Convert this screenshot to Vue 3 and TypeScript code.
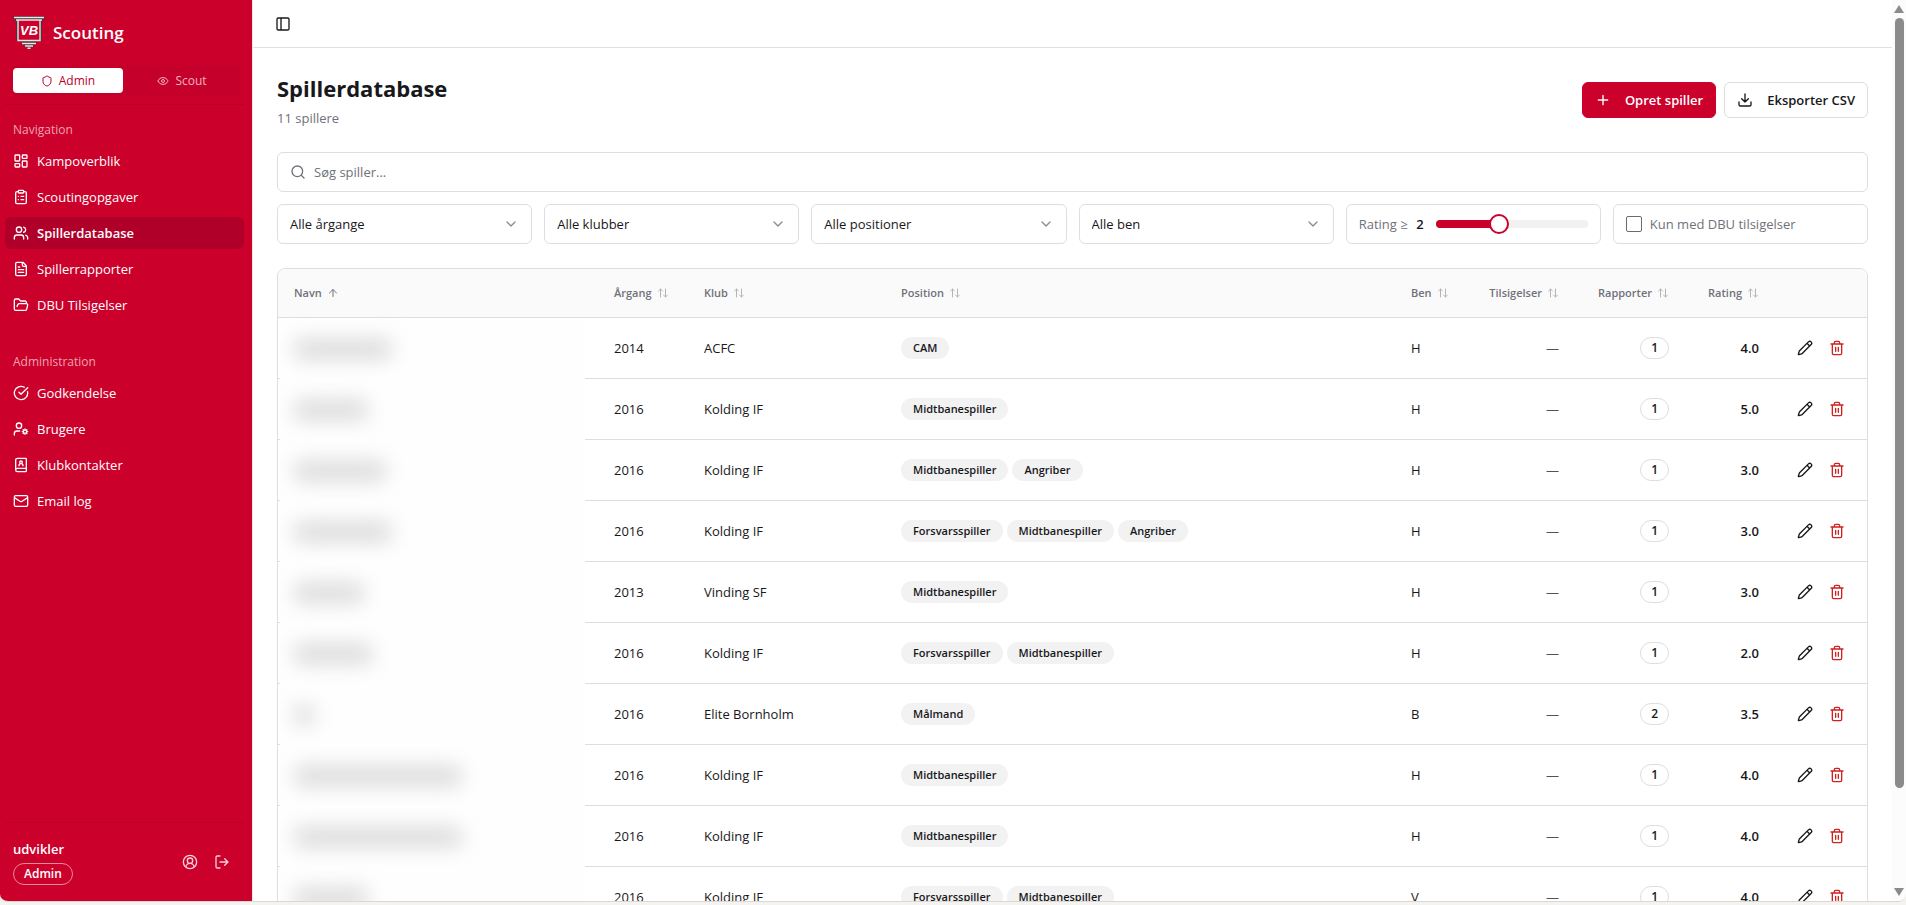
<script setup lang="ts">
import { computed, h, ref } from 'vue'

const paths = {
  dashboard: 'M4 3h5a1 1 0 0 1 1 1v7a1 1 0 0 1-1 1H4a1 1 0 0 1-1-1V4a1 1 0 0 1 1-1z M15 3h5a1 1 0 0 1 1 1v3a1 1 0 0 1-1 1h-5a1 1 0 0 1-1-1V4a1 1 0 0 1 1-1z M15 12h5a1 1 0 0 1 1 1v7a1 1 0 0 1-1 1h-5a1 1 0 0 1-1-1v-7a1 1 0 0 1 1-1z M4 16h5a1 1 0 0 1 1 1v3a1 1 0 0 1-1 1H4a1 1 0 0 1-1-1v-3a1 1 0 0 1 1-1z',
  clipboard: 'M9 2h6a1 1 0 0 1 1 1v2a1 1 0 0 1-1 1H9a1 1 0 0 1-1-1V3a1 1 0 0 1 1-1z M16 4h2a2 2 0 0 1 2 2v14a2 2 0 0 1-2 2H6a2 2 0 0 1-2-2V6a2 2 0 0 1 2-2h2 M12 11h4 M12 16h4 M8 11h.01 M8 16h.01',
  users: 'M16 21v-2a4 4 0 0 0-4-4H6a4 4 0 0 0-4 4v2 M5 7a4 4 0 1 0 8 0a4 4 0 1 0-8 0 M22 21v-2a4 4 0 0 0-3-3.87 M16 3.13a4 4 0 0 1 0 7.75',
  file: 'M15 2H6a2 2 0 0 0-2 2v16a2 2 0 0 0 2 2h12a2 2 0 0 0 2-2V7Z M14 2v4a2 2 0 0 0 2 2h4 M10 9H8 M16 13H8 M16 17H8',
  folder: 'm6 14 1.5-2.9A2 2 0 0 1 9.24 10H20a2 2 0 0 1 1.94 2.5l-1.54 6a2 2 0 0 1-1.95 1.5H4a2 2 0 0 1-2-2V5a2 2 0 0 1 2-2h3.9a2 2 0 0 1 1.69.9l.81 1.2a2 2 0 0 0 1.67.9H18a2 2 0 0 1 2 2v2',
  check: 'M21.8 10A10 10 0 1 1 17 3.34 M9 11l3 3L22 4',
  userCog: 'M5 7a4 4 0 1 0 8 0a4 4 0 1 0-8 0 M10 15H6a4 4 0 0 0-4 4v2 M15.5 16a2.5 2.5 0 1 0 5 0a2.5 2.5 0 1 0-5 0 M18 12v1 M18 19v1 M14 16h1 M21 16h1 M15.2 13.2l.7.7 M20.1 18.1l.7.7 M15.2 18.8l.7-.7 M20.1 13.9l.7-.7',
  book: 'M15 13a3 3 0 1 0-6 0 M4 19.5v-15A2.5 2.5 0 0 1 6.5 2H19a1 1 0 0 1 1 1v18a1 1 0 0 1-1 1H6.5a1 1 0 0 1 0-5H20 M10 8a2 2 0 1 0 4 0a2 2 0 1 0-4 0',
  mail: 'M4 4h16a2 2 0 0 1 2 2v12a2 2 0 0 1-2 2H4a2 2 0 0 1-2-2V6a2 2 0 0 1 2-2z M22 7l-8.97 5.7a1.94 1.94 0 0 1-2.06 0L2 7',
  shield: 'M20 13c0 5-3.5 7.5-7.66 8.95a1 1 0 0 1-.67-.01C7.5 20.5 4 18 4 13V6a1 1 0 0 1 1-1c2 0 4.5-1.2 6.24-2.72a1.17 1.17 0 0 1 1.52 0C14.51 3.81 17 5 19 5a1 1 0 0 1 1 1z',
  eye: 'M2.06 12.35a1 1 0 0 1 0-.7 10.75 10.75 0 0 1 19.88 0 1 1 0 0 1 0 .7 10.75 10.75 0 0 1-19.88 0 M9 12a3 3 0 1 0 6 0a3 3 0 1 0-6 0',
  account: 'M2 12a10 10 0 1 0 20 0a10 10 0 1 0-20 0 M8 10a4 4 0 1 0 8 0a4 4 0 1 0-8 0 M18 20a6 6 0 0 0-12 0',
  logout: 'M9 21H5a2 2 0 0 1-2-2V5a2 2 0 0 1 2-2h4 M16 17l5-5-5-5 M21 12H9',
  panel: 'M5 3h14a2 2 0 0 1 2 2v14a2 2 0 0 1-2 2H5a2 2 0 0 1-2-2V5a2 2 0 0 1 2-2z M9 3v18',
  plus: 'M5 12h14 M12 5v14',
  download: 'M21 15v4a2 2 0 0 1-2 2H5a2 2 0 0 1-2-2v-4 M7 10l5 5 5-5 M12 15V3',
  search: 'M3 11a8 8 0 1 0 16 0a8 8 0 1 0-16 0 M21 21l-4.3-4.3',
  chevron: 'M6 9l6 6 6-6',
  arrowUp: 'M5 12l7-7 7 7 M12 19V5',
  sort: 'M21 16l-4 4-4-4 M17 20V4 M3 8l4-4 4 4 M7 4v16',
  pencil: 'M21.17 6.81a1 1 0 0 0-3.99-3.99L3.84 16.17a2 2 0 0 0-.5.83l-1.32 4.35a.5.5 0 0 0 .62.62l4.35-1.32a2 2 0 0 0 .83-.5z M15 5l4 4',
  trash: 'M3 6h18 M19 6v14a2 2 0 0 1-2 2H7a2 2 0 0 1-2-2V6 M8 6V4a2 2 0 0 1 2-2h4a2 2 0 0 1 2 2v2 M10 11v6 M14 11v6',
}
type IconName = keyof typeof paths

const Icon = (props: { name: IconName }) =>
  h('svg', { viewBox: '0 0 24 24', fill: 'none', stroke: 'currentColor', 'stroke-width': 2, 'stroke-linecap': 'round', 'stroke-linejoin': 'round', 'aria-hidden': 'true' }, [
    h('path', { d: paths[props.name] }),
  ])
Icon.props = ['name']

interface NavItem { label: string; icon: IconName; active?: boolean }
const groups: { title: string; items: NavItem[] }[] = [
  {
    title: 'Navigation',
    items: [
      { label: 'Kampoverblik', icon: 'dashboard' },
      { label: 'Scoutingopgaver', icon: 'clipboard' },
      { label: 'Spillerdatabase', icon: 'users', active: true },
      { label: 'Spillerrapporter', icon: 'file' },
      { label: 'DBU Tilsigelser', icon: 'folder' },
    ],
  },
  {
    title: 'Administration',
    items: [
      { label: 'Godkendelse', icon: 'check' },
      { label: 'Brugere', icon: 'userCog' },
      { label: 'Klubkontakter', icon: 'book' },
      { label: 'Email log', icon: 'mail' },
    ],
  },
]

const filters = [
  { id: 'year', label: 'Årgang', option: 'Alle årgange' },
  { id: 'club', label: 'Klub', option: 'Alle klubber' },
  { id: 'position', label: 'Position', option: 'Alle positioner' },
  { id: 'foot', label: 'Ben', option: 'Alle ben' },
]

const query = ref('')
const minRating = ref(2)
const onlyDbu = ref(false)
const fill = computed(() => ({ '--fill': `${(minRating.value / 5) * 100}%` }))

const columns = [
  { key: 'name', label: 'Navn' },
  { key: 'year', label: 'Årgang' },
  { key: 'club', label: 'Klub' },
  { key: 'pos', label: 'Position' },
  { key: 'foot', label: 'Ben' },
  { key: 'calls', label: 'Tilsigelser' },
  { key: 'reports', label: 'Rapporter' },
  { key: 'rating', label: 'Rating' },
]

interface Player { nameWidth: number; year: number; club: string; positions: string[]; foot: string; reports: number; rating: string }
const M = 'Midtbanespiller'
const F = 'Forsvarsspiller'
const A = 'Angriber'
const players: Player[] = [
  { nameWidth: 98, year: 2014, club: 'ACFC', positions: ['CAM'], foot: 'H', reports: 1, rating: '4.0' },
  { nameWidth: 74, year: 2016, club: 'Kolding IF', positions: [M], foot: 'H', reports: 1, rating: '5.0' },
  { nameWidth: 92, year: 2016, club: 'Kolding IF', positions: [M, A], foot: 'H', reports: 1, rating: '3.0' },
  { nameWidth: 98, year: 2016, club: 'Kolding IF', positions: [F, M, A], foot: 'H', reports: 1, rating: '3.0' },
  { nameWidth: 70, year: 2013, club: 'Vinding SF', positions: [M], foot: 'H', reports: 1, rating: '3.0' },
  { nameWidth: 78, year: 2016, club: 'Kolding IF', positions: [F, M], foot: 'H', reports: 1, rating: '2.0' },
  { nameWidth: 20, year: 2016, club: 'Elite Bornholm', positions: ['Målmand'], foot: 'B', reports: 2, rating: '3.5' },
  { nameWidth: 168, year: 2016, club: 'Kolding IF', positions: [M], foot: 'H', reports: 1, rating: '4.0' },
  { nameWidth: 168, year: 2016, club: 'Kolding IF', positions: [M], foot: 'H', reports: 1, rating: '4.0' },
  { nameWidth: 74, year: 2016, club: 'Kolding IF', positions: [F, M], foot: 'V', reports: 1, rating: '4.0' },
]
</script>

<template>
  <div class="window">
    <div class="app">
      <aside class="sidebar">
        <div class="brand">
          <svg class="logo" viewBox="0 0 32 34" aria-hidden="true">
            <path d="M0 0h32l-2 5h-1v20h-5l-2 4-6 4-6-4-2-4H3V5H2z" fill="#4a3238" />
            <path d="M6 4h20v20H6z" fill="#cb002b" />
            <path d="M1 1.500h30M3 4h26M5 4v20.500h22V4M9 27.500h14M12 30h8M14.500 32.300h3" fill="none" stroke="#f1e4e8" stroke-width="1.400" />
            <text x="16" y="19" text-anchor="middle" class="logo-text">VB</text>
          </svg>
          <span>Scouting</span>
        </div>

        <div class="mode">
          <button type="button" class="mode-btn on"><Icon name="shield" />Admin</button>
          <button type="button" class="mode-btn"><Icon name="eye" />Scout</button>
        </div>

        <nav class="nav">
          <section v-for="g in groups" :key="g.title" class="group">
            <h2>{{ g.title }}</h2>
            <a v-for="i in g.items" :key="i.label" href="#" :class="{ active: i.active }">
              <Icon :name="i.icon" />{{ i.label }}
            </a>
          </section>
        </nav>

        <footer class="user">
          <div class="who">
            <strong>udvikler</strong>
            <span class="role">Admin</span>
          </div>
          <button type="button" aria-label="Profil"><Icon name="account" /></button>
          <button type="button" aria-label="Log ud"><Icon name="logout" /></button>
        </footer>
      </aside>

      <main class="main">
        <header class="topbar">
          <button type="button" aria-label="Skjul menu"><Icon name="panel" /></button>
        </header>

        <div class="content">
          <div class="heading">
            <div>
              <h1>Spillerdatabase</h1>
              <p>11 spillere</p>
            </div>
            <div class="actions">
              <button type="button" class="btn primary"><Icon name="plus" />Opret spiller</button>
              <button type="button" class="btn"><Icon name="download" />Eksporter CSV</button>
            </div>
          </div>

          <label class="field search">
            <Icon name="search" />
            <input v-model="query" type="text" placeholder="Søg spiller..." aria-label="Søg spiller" />
          </label>

          <div class="filters">
            <div v-for="f in filters" :key="f.id" class="select">
              <select :id="f.id" class="field" :aria-label="f.label">
                <option>{{ f.option }}</option>
              </select>
              <Icon name="chevron" />
            </div>
            <div class="field rating-filter">
              <label for="rating">Rating ≥ <b>{{ minRating }}</b></label>
              <input id="rating" v-model.number="minRating" type="range" min="0" max="5" step="1" :style="fill" />
            </div>
            <label class="field dbu">
              <input v-model="onlyDbu" type="checkbox" />
              <span>Kun med DBU tilsigelser</span>
            </label>
          </div>

          <div class="table-wrap">
            <table>
              <thead>
                <tr>
                  <th v-for="c in columns" :key="c.key" scope="col" :class="c.key">
                    <button type="button" :class="{ sorted: c.key === 'name' }">
                      {{ c.label }}<Icon :name="c.key === 'name' ? 'arrowUp' : 'sort'" />
                    </button>
                  </th>
                  <th class="tools" aria-label="Handlinger"></th>
                </tr>
              </thead>
              <tbody>
                <tr v-for="(p, n) in players" :key="n">
                  <td class="name">
                    <div class="veil"><i :style="{ width: p.nameWidth + 'px' }"></i></div>
                  </td>
                  <td>{{ p.year }}</td>
                  <td>{{ p.club }}</td>
                  <td>
                    <div class="tags"><span v-for="t in p.positions" :key="t">{{ t }}</span></div>
                  </td>
                  <td>{{ p.foot }}</td>
                  <td class="calls muted">—</td>
                  <td class="reports"><span class="count">{{ p.reports }}</span></td>
                  <td class="rating">{{ p.rating }}</td>
                  <td class="tools">
                    <div>
                      <button type="button" aria-label="Rediger"><Icon name="pencil" /></button>
                      <button type="button" aria-label="Slet" class="danger"><Icon name="trash" /></button>
                    </div>
                  </td>
                </tr>
              </tbody>
            </table>
          </div>
        </div>
      </main>

      <div class="scrollbar" aria-hidden="true">
        <svg viewBox="0 0 10 8"><path d="M5 0l5 8H0z" /></svg>
        <div class="track"><div class="thumb"></div></div>
        <svg viewBox="0 0 10 8"><path d="M5 8l5-8H0z" /></svg>
      </div>
    </div>
  </div>
</template>

<style>
body {
  margin: 0;
  background: #f4f3ef;
}
</style>

<style scoped>
* {
  box-sizing: border-box;
}
.window {
  height: 100vh;
  padding-bottom: 3px;
  background: #f4f3ef;
  font-family: "Open Sans", "Noto Sans", sans-serif;
  font-size: 13px;
  line-height: 20px;
  color: #18181b;
}
.app {
  display: flex;
  height: 100%;
  overflow: hidden;
  border-bottom: 1px solid #d9d8d2;
  border-radius: 0 0 8px 8px;
  background: #fff;
}
button,
input,
select {
  font: inherit;
  color: inherit;
}
button {
  display: inline-flex;
  align-items: center;
  padding: 0;
  border: 0;
  background: none;
  cursor: pointer;
}
svg {
  width: 16px;
  height: 16px;
  flex: none;
}

.sidebar {
  display: flex;
  flex-direction: column;
  flex: none;
  width: 252px;
  padding: 0 8px 0 5px;
  background: #cb002b;
  color: #fff;
}
.brand {
  display: flex;
  align-items: center;
  gap: 8px;
  height: 65px;
  padding: 0 8px;
  font-size: 17px;
  font-weight: 600;
}
.logo {
  width: 32px;
  height: 34px;
}
.logo-text {
  font: italic bold 13px "Liberation Sans", sans-serif;
  fill: #fff;
}
.mode {
  display: flex;
  gap: 4px;
  margin: 0 4px 8px 5px;
  padding: 3px;
  border-radius: 6px;
  background: #c5002a;
}
.mode-btn {
  flex: 1;
  justify-content: center;
  gap: 6px;
  height: 25px;
  border-radius: 4px;
  font-size: 12px;
  font-weight: 500;
  color: #f3b3c0;
}
.mode-btn svg {
  width: 12px;
  height: 12px;
}
.mode-btn.on {
  background: #fff;
  color: #b80028;
}
.nav {
  flex: 1;
  padding-top: 9px;
  border-top: 1px solid #bd0029;
}
.group {
  display: flex;
  flex-direction: column;
  gap: 4px;
  margin-bottom: 25px;
}
.group h2 {
  margin: 0;
  padding: 0 8px;
  font-size: 12px;
  font-weight: 500;
  line-height: 32px;
  height: 27px;
  color: #efa3b2;
}
.group a {
  display: flex;
  align-items: center;
  gap: 8px;
  height: 32px;
  padding: 0 8px;
  border-radius: 6px;
  color: #fff;
  text-decoration: none;
}
.group a.active {
  background: #b0002a;
  font-weight: 600;
}
.user {
  display: flex;
  align-items: center;
  gap: 16px;
  padding: 16px 14px 16px 8px;
  border-top: 1px solid #bd0029;
}
.user button {
  color: #f8d0d8;
}
.who {
  display: flex;
  flex-direction: column;
  align-items: flex-start;
  gap: 4px;
  flex: 1;
}
.who strong {
  font-weight: 600;
}
.role {
  padding: 0 10px;
  border: 1px solid #e98a9d;
  border-radius: 11px;
  font-size: 12px;
  font-weight: 600;
}

.main {
  flex: 1;
  min-width: 0;
  overflow: hidden;
  border-left: 1px solid #f1e6e8;
}
.topbar {
  display: flex;
  align-items: center;
  height: 48px;
  padding-left: 22px;
  border-bottom: 1px solid #e0e0e0;
}
.content {
  display: flex;
  flex-direction: column;
  gap: 12px;
  padding: 24px;
}
.heading {
  display: flex;
  align-items: center;
  justify-content: space-between;
  margin-bottom: 12px;
}
h1 {
  margin: 0 0 4px;
  font-size: 22px;
  font-weight: 700;
  line-height: 32px;
}
.heading p {
  margin: 0;
  color: #71717a;
}
.actions {
  display: flex;
  gap: 8px;
}
.btn {
  gap: 14px;
  height: 36px;
  padding: 0 12px;
  border: 1px solid #dedede;
  border-radius: 6px;
  font-weight: 600;
}
.btn.primary {
  border-color: #cb002b;
  background: #cb002b;
  color: #fff;
}
.field {
  display: flex;
  align-items: center;
  gap: 8px;
  width: 100%;
  height: 40px;
  padding: 0 12px;
  border: 1px solid #dedede;
  border-radius: 6px;
  background: #fff;
}
.search svg {
  color: #71717a;
}
.search input {
  flex: 1;
  padding: 0;
  border: 0;
  outline: 0;
  background: none;
}
.search input::placeholder {
  color: #71717a;
  opacity: 1;
}
.filters {
  display: grid;
  grid-template-columns: repeat(6, minmax(0, 1fr));
  gap: 12px;
}
.select {
  display: grid;
  align-items: center;
}
.select > * {
  grid-area: 1 / 1;
}
.select select {
  appearance: none;
}
.select svg {
  justify-self: end;
  margin-right: 13px;
  color: #8b8b8b;
  pointer-events: none;
}
.rating-filter,
.dbu {
  color: #71717a;
}
.rating-filter {
  gap: 12px;
}
.rating-filter label {
  display: flex;
  justify-content: space-between;
  width: 65px;
  white-space: nowrap;
}
.rating-filter b {
  font-weight: 600;
  color: #18181b;
}
.rating-filter input {
  flex: 1;
  min-width: 0;
  height: 8px;
  margin: 0;
  appearance: none;
  border-radius: 4px;
  background: linear-gradient(to right, #cb002b var(--fill), #f1f1f1 var(--fill));
}
.rating-filter input::-webkit-slider-thumb {
  appearance: none;
  width: 20px;
  height: 20px;
  border: 2px solid #cb002b;
  border-radius: 50%;
  background: #fff;
}
.dbu input {
  appearance: none;
  width: 16px;
  height: 16px;
  margin: 0;
  border: 1px solid #6b6b6b;
  border-radius: 2px;
}
.dbu input:checked {
  background: #cb002b;
}

.table-wrap {
  margin-top: 12px;
  overflow: hidden;
  border: 1px solid #dedede;
  border-radius: 8px;
}
table {
  width: 100%;
  table-layout: fixed;
  border-collapse: separate;
  border-spacing: 0;
}
th,
td {
  padding: 0 16px;
  border-bottom: 1px solid #dedede;
  text-align: left;
}
th {
  height: 49px;
  background: #fafafa;
  font-size: 11px;
  font-weight: 600;
  color: #71717a;
}
td {
  height: 61px;
}
th button {
  gap: 5px;
  white-space: nowrap;
}
th svg {
  width: 12px;
  height: 12px;
  opacity: 0.5;
}
th .sorted svg {
  opacity: 1;
}
th.name {
  width: 320px;
}
th.year {
  width: 90px;
}
th.club {
  width: 197px;
}
th.foot {
  width: 78px;
}
th.calls {
  width: 102px;
}
th.reports {
  width: 110px;
}
th.rating {
  width: 90px;
}
th.tools {
  width: 92px;
}
.calls,
.reports,
.rating {
  text-align: right;
}
td.name {
  position: relative;
}
.veil {
  position: absolute;
  inset: 0 13px -1px 2px;
  display: flex;
  align-items: center;
  padding-left: 14px;
  background: #fefefe;
  overflow: hidden;
}
.veil i {
  height: 20px;
  border-radius: 8px;
  background: #dadada;
  filter: blur(10px);
}
.muted {
  color: #52525b;
}
.tags {
  display: flex;
  gap: 4px;
}
.tags span {
  padding: 1px 12px;
  border-radius: 11px;
  background: #f2f2f2;
  font-size: 11px;
  font-weight: 600;
}
.count {
  display: inline-block;
  padding: 0 10px;
  border: 1px solid #dedede;
  border-radius: 11px;
  font-size: 12px;
  font-weight: 600;
}
td.rating {
  font-weight: 600;
}
td.tools div {
  display: flex;
  justify-content: flex-end;
  gap: 16px;
  margin-right: 6px;
}
.danger {
  color: #d02020;
}

.scrollbar {
  display: flex;
  flex-direction: column;
  align-items: center;
  flex: none;
  width: 14px;
  padding: 4px 0;
  background: #fcfcfc;
}
.scrollbar svg {
  width: 10px;
  height: 10px;
  fill: #8b8b8b;
}
.track {
  flex: 1;
  width: 9px;
  padding: 4px 0;
}
.thumb {
  height: 89%;
  border-radius: 5px;
  background: #8b8b8b;
}
</style>
